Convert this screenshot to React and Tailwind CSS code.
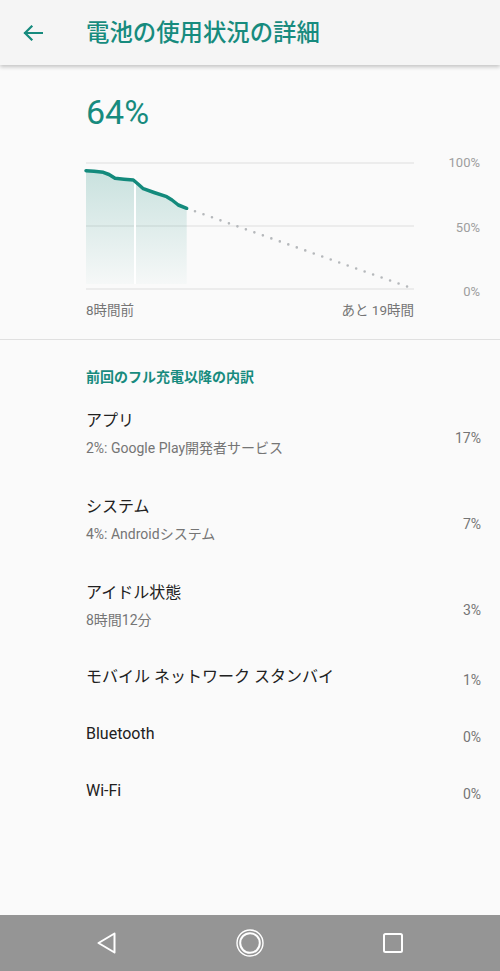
import React from "react";

const teal = "#178b7e";

function Row({ title, sub, value }) {
  return (
    <div className={`flex items-center justify-between pl-[86px] pr-[19px] ${sub ? "h-[86px]" : "h-[57px]"}`}>
      <div className="flex flex-col">
        <div className="text-[16px] leading-[24px] text-[#212121]">{title}</div>
        {sub && <div className="mt-[5px] text-[14px] leading-[20px] text-[#757575]">{sub}</div>}
      </div>
      <div className={`text-[14px] leading-[20px] text-[#757575] ${sub ? "mt-[10px]" : "mt-[6px]"}`}>{value}</div>
    </div>
  );
}

export default function App() {
  const pts = [
    [0, 10.7], [8, 11.2], [17.3, 12.3], [23, 14.5], [29, 18.3], [38, 19.2], [47.3, 20], [52, 24], [57.3, 28.7],
    [68, 32.5], [80.7, 36.7], [86, 40], [92.3, 45], [100.7, 48.3],
  ];
  const line = pts.map((p, i) => `${i ? "L" : "M"}${p[0]} ${p[1]}`).join(" ");
  const area = `${line} L100.7 124 L0 124 Z`;
  return (
    <div className="w-[500px] h-[971px] flex flex-col bg-[#fafafa] font-[Roboto,'Noto_Sans_CJK_JP',sans-serif] overflow-hidden">
      <div className="relative z-10 h-[65px] shrink-0 bg-[#f5f5f5] shadow-[0_2px_4px_rgba(0,0,0,0.22)] flex items-center">
        <svg width="20" height="16" viewBox="0 0 20 16" className="ml-[23px]">
          <path d="M19 8H2M8.5 1.5L2 8l6.5 6.5" fill="none" stroke={teal} strokeWidth="2.2" strokeLinecap="square" />
        </svg>
        <div className="ml-[43px] text-[23.4px] leading-[30px] font-medium" style={{ color: teal }}>電池の使用状況の詳細</div>
      </div>

      <div className="flex-1 flex flex-col">
        <div className="mt-[27px] ml-[86px] text-[34px] leading-[40px]" style={{ color: teal }}>64%</div>

        <div className="mt-[23px] flex pl-[86px] pr-[20px]">
          <svg width="328" height="132" viewBox="0 0 328 132" className="mt-[5px] shrink-0 overflow-visible">
            <defs>
              <linearGradient id="g" x1="0" y1="0" x2="0" y2="1">
                <stop offset="0" stopColor="#1a8a7c" stopOpacity="0.22" />
                <stop offset="1" stopColor="#1a8a7c" stopOpacity="0.02" />
              </linearGradient>
            </defs>
            <line x1="0" y1="3" x2="328" y2="3" stroke="#dedede" strokeWidth="1.2" />
            <line x1="0" y1="66" x2="328" y2="66" stroke="#dedede" strokeWidth="1.2" />
            <line x1="0" y1="129" x2="328" y2="129" stroke="#dedede" strokeWidth="1.2" />
            <path d={area} fill="url(#g)" />
            <line x1="49" y1="15" x2="49" y2="124" stroke="#ffffff" strokeWidth="2" />
            <path d={line} fill="none" stroke="#138a7c" strokeWidth="3.5" strokeLinecap="round" strokeLinejoin="round" />
            <line x1="109" y1="51.3" x2="328" y2="129" stroke="#b5b8bb" strokeWidth="2.6" strokeDasharray="0 9" strokeLinecap="round" />
          </svg>
          <div className="flex-1 h-[145px] flex flex-col justify-between items-end text-[13px] leading-[16px] text-[#9e9e9e]">
            <div>100%</div>
            <div>50%</div>
            <div>0%</div>
          </div>
        </div>

        <div className="mt-[2px] ml-[86px] w-[328px] flex justify-between text-[13.5px] leading-[16px] text-[#757575]">
          <div>8時間前</div>
          <div>あと 19時間</div>
        </div>

        <div className="mt-[21px] h-px bg-[#e0e0e0]" />

        <div className="mt-[27px] ml-[86px] text-[14px] leading-[20px] font-bold" style={{ color: teal }}>前回のフル充電以降の内訳</div>

        <div className="mt-[3px] flex flex-col">
          <Row title="アプリ" sub="2%: Google Play開発者サービス" value="17%" />
          <Row title="システム" sub="4%: Androidシステム" value="7%" />
          <Row title="アイドル状態" sub="8時間12分" value="3%" />
          <Row title="モバイル ネットワーク スタンバイ" value="1%" />
          <Row title="Bluetooth" value="0%" />
          <Row title="Wi-Fi" value="0%" />
        </div>
      </div>

      <div className="h-[56px] shrink-0 bg-[#959595] flex items-center justify-between px-[96px]">
        <svg width="22" height="24" viewBox="0 0 22 24">
          <path d="M18.5 2.5 L2.5 12 L18.5 21.5 Z" fill="none" stroke="#fff" strokeWidth="2" strokeLinejoin="round" />
        </svg>
        <svg width="30" height="30" viewBox="0 0 30 30">
          <circle cx="15" cy="15" r="13" fill="none" stroke="#fff" strokeWidth="1.4" />
          <circle cx="15" cy="15" r="9.8" fill="none" stroke="#fff" strokeWidth="2" />
        </svg>
        <svg width="22" height="22" viewBox="0 0 22 22">
          <rect x="2" y="2" width="18" height="18" rx="1.5" fill="none" stroke="#fff" strokeWidth="2" />
        </svg>
      </div>
    </div>
  );
}
